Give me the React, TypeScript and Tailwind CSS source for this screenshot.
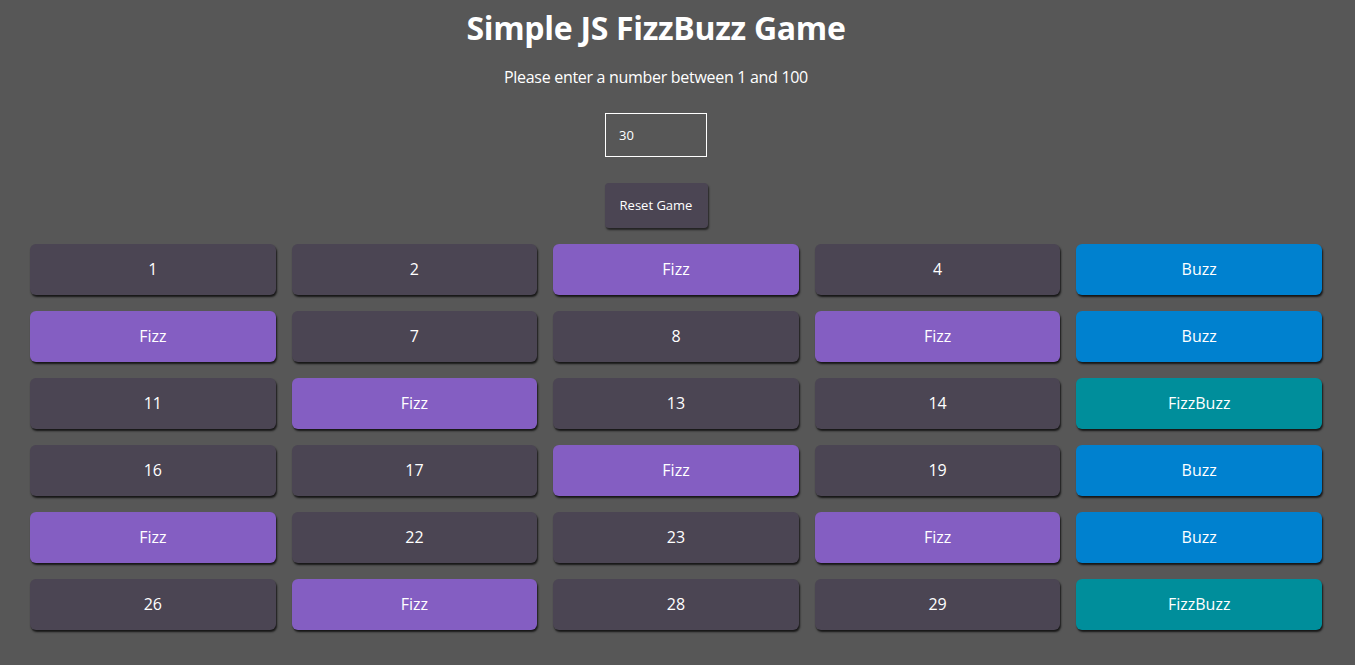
// App.tsx
// FizzBuzz board: numbers 1..n rendered as coloured tiles.
import { useState } from "react";

const tileColour = (n: number) => {
	if (n % 15 === 0) return "bg-[#008e9b]";
	if (n % 5 === 0) return "bg-[#0081cf]";
	if (n % 3 === 0) return "bg-[#845ec2]";
	return "bg-[#4b4553]";
};

const tileLabel = (n: number) => {
	if (n % 15 === 0) return "FizzBuzz";
	if (n % 5 === 0) return "Buzz";
	if (n % 3 === 0) return "Fizz";
	return String(n);
};

export default function App() {
	const [value, setValue] = useState("30");
	const count = Math.min(100, Math.max(0, parseInt(value, 10) || 0));
	const numbers = Array.from({ length: count }, (_, i) => i + 1);

	return (
		<div
			className="min-h-screen bg-[#575757] text-white pb-[35px]"
			style={{ fontFamily: '"Open Sans", "Noto Sans", sans-serif' }}
		>
			{/* header block sits a little left of the page centre */}
			<div className="pr-[43px]">
				<h1 className="pt-[8px] text-center text-[32px] leading-[40px] font-bold tracking-[-0.3px]">
					Simple JS FizzBuzz Game
				</h1>
				<p className="mt-[17px] text-center text-[16px] leading-[24px] tracking-[-0.3px]">
					Please enter a number between 1 and 100
				</p>

				<div className="mt-[24px] flex flex-col items-center">
					<input
						type="text"
						value={value}
						onChange={(e) => setValue(e.target.value)}
						className="w-[102px] h-[44px] border border-white bg-transparent px-[13px] text-[13px] text-white outline-none"
					/>
					<button
						onClick={() => setValue("")}
						className="mt-[26px] w-[103px] h-[45px] rounded-[4px] bg-[#4b4553] text-[13px] text-white shadow-[1px_2px_2px_rgba(0,0,0,0.6)]"
					>
						Reset Game
					</button>
				</div>
			</div>

			<div className="mt-[16px] ml-[30px] mr-[33px] grid grid-cols-5 gap-[16px]">
				{numbers.map((n) => (
					<div
						key={n}
						className={`${tileColour(n)} h-[51px] rounded-[6px] flex items-center justify-center text-[16px] leading-[22px] pb-[1px] shadow-[1px_2px_2px_rgba(0,0,0,0.75)]`}
					>
						{tileLabel(n)}
					</div>
				))}
			</div>
		</div>
	);
}
